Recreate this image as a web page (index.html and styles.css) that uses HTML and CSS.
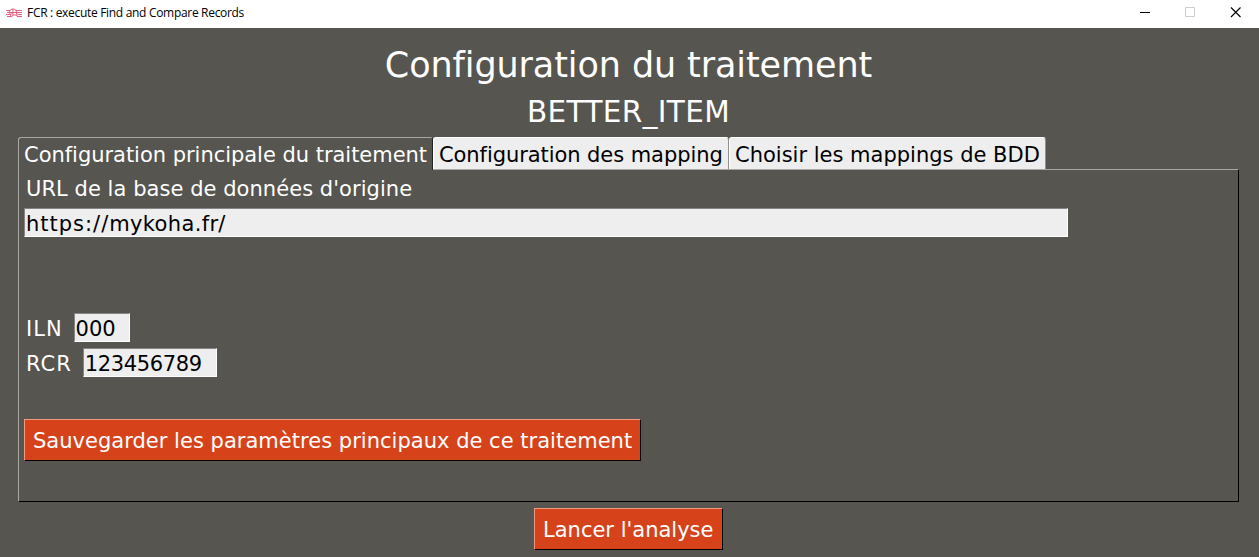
FILE: index.html
```html
<!DOCTYPE html>
<html lang="fr">
<head>
<meta charset="utf-8">
<title>FCR : execute Find and Compare Records</title>
<link rel="stylesheet" href="styles.css">
</head>
<body>
<header class="titlebar">
  <svg class="logo" width="16" height="10" viewBox="0 0 16 10" fill="none" stroke="#e8607f" stroke-width="1">
    <path d="M0 2.500h4l2-1.500h2l2 1.500h6M1 4.500h15M0 6.500h5l2-2h3l2 2h4M1 8.500h5l1-1.500h3l1 1.500h5M3 3l2 5M7 1v6M10 2l1 6"/>
  </svg>
  <span class="caption">FCR : execute Find and Compare Records</span>
  <div class="controls">
    <svg width="45" height="28" viewBox="0 0 45 28"><path d="M17 12.500h10" stroke="#000"/></svg>
    <svg width="45" height="28" viewBox="0 0 45 28"><path d="M17.500 7.500h9v9h-9z" fill="none" stroke="#ccc"/></svg>
    <svg width="45" height="28" viewBox="0 0 45 28"><path d="M18 7.500l9.500 9.500M27.500 7.500l-9.500 9.500" stroke="#000" stroke-width="1.100"/></svg>
  </div>
</header>
<main class="window">
  <h1 class="title">Configuration du traitement</h1>
  <h2 class="subtitle">BETTER_ITEM</h2>
  <nav class="tabs">
    <div class="tab tab-active">Configuration principale du traitement</div>
    <div class="tab tab-mapping">Configuration des mapping</div>
    <div class="tab tab-bdd">Choisir les mappings de BDD</div>
  </nav>
  <section class="panel">
    <div class="label url-label">URL de la base de données d'origine</div>
    <div class="field url-field"><span class="scheme">https://</span>mykoha.fr/</div>
    <div class="row row-iln"><span class="label">ILN</span><div class="field iln-field">000</div></div>
    <div class="row row-rcr"><span class="label">RCR</span><div class="field rcr-field">123456789</div></div>
    <div class="button save">Sauvegarder les paramètres principaux de ce traitement</div>
  </section>
  <div class="button launch">Lancer l'analyse</div>
</main>
</body>
</html>
```
FILE: styles.css
```css
* { box-sizing: border-box; }
body {
  margin: 0;
  width: 1259px;
  height: 557px;
  overflow: hidden;
  background: #565550;
  color: #fff;
  font: 21px/28px Verdana, "DejaVu Sans", sans-serif;
  font-variant-ligatures: none;
  white-space: nowrap;
}
.titlebar {
  display: flex;
  height: 28px;
  background: #fff;
  color: #000;
}
.logo { margin: 8px 5px 0 6px; }
.caption {
  font: 12px/26px "Segoe UI", "Open Sans", sans-serif;
  letter-spacing: -0.31px;
}
.controls { display: flex; margin: 0 1px 0 auto; }
.window { display: flex; flex-direction: column; }
.title, .subtitle { margin: 0; padding-right: 2px; font-weight: 400; text-align: center; }
.title { font-size: 35px; line-height: 44px; margin-top: 15px; letter-spacing: -0.1px; }
.subtitle { font-size: 29.5px; line-height: 36px; margin-top: 7px; letter-spacing: 0.35px; }
.tabs { display: flex; height: 32px; margin: 7px 0 0 18px; line-height: 35px; }
.tab {
  height: 32px;
  padding-left: 5px;
  color: #000;
  background: #eee;
  border: 1px solid #fff;
  border-right-color: #8f8f8c;
  border-bottom: 0;
  border-radius: 3px 3px 0 0;
}
.tab-active {
  width: 415px;
  height: 33px;
  position: relative;
  color: #fff;
  background: #565550;
  border-color: #a9a9a4;
  border-right-color: #222;
  letter-spacing: -0.03px;
}
.tab-mapping { width: 296px; letter-spacing: -0.07px; }
.tab-bdd { width: 317px; }
.panel {
  width: 1221px;
  height: 333px;
  margin-left: 18px;
  padding: 5px 5px 0;
  border: 1px solid #a9a9a4;
  border-right-color: #000;
  border-bottom-color: #000;
}
.label { padding-left: 2px; }
.url-label { letter-spacing: 0.05px; }
.field {
  height: 29px;
  padding-left: 1px;
  line-height: 30px;
  color: #000;
  background: #eee;
  border: 1px solid #858585;
  border-right-color: #fff;
  border-bottom-color: #fff;
}
.url-field { width: 1044px; margin-top: 5px; letter-spacing: 0.34px; }
.scheme { letter-spacing: 1px; }
.row { display: flex; align-items: center; height: 29px; line-height: 30px; }
.row .label { padding-top: 2px; letter-spacing: 1px; }
.row-iln { margin-top: 76px; gap: 11px; }
.row-rcr { margin-top: 6px; gap: 11px; }
.iln-field { width: 56px; }
.rcr-field { width: 134px; letter-spacing: -0.36px; }
.button {
  height: 42px;
  padding-left: 8px;
  line-height: 43px;
  background: #d6431b;
  border: 1px solid #f29a80;
  border-right-color: #000;
  border-bottom-color: #000;
}
.save { width: 617px; margin-top: 42px; letter-spacing: 0.02px; }
.launch { width: 189px; margin: 6px 0 0 534px; }
```
